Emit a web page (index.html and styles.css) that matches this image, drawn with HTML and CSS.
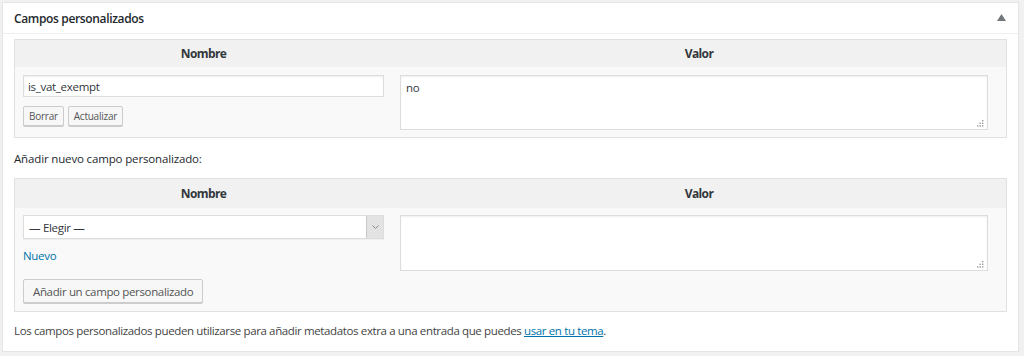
FILE: index.html
```html
<!DOCTYPE html>
<html lang="es">
<head>
<meta charset="utf-8">
<title>Campos personalizados</title>
<link rel="stylesheet" href="styles.css">
</head>
<body>
<div class="postbox">
  <div class="postbox-header">
    <h2 class="postbox-title">Campos personalizados</h2>
    <svg class="toggle" width="9" height="7" viewBox="0 0 9 7"><polygon points="4.5,0 9,7 0,7" fill="#72777c"/></svg>
  </div>
  <div class="inside">
    <table class="meta-table meta-list">
      <thead>
        <tr><th class="col-name">Nombre</th><th class="col-value">Valor</th></tr>
      </thead>
      <tbody>
        <tr>
          <td class="cell-name">
            <input class="text-input" type="text" value="is_vat_exempt">
            <div class="btn-row">
              <button class="btn btn-small">Borrar</button>
              <button class="btn btn-small">Actualizar</button>
            </div>
          </td>
          <td class="cell-value">
            <div class="ta-wrap">
              <textarea class="ta ta-1">no</textarea>
              <svg class="grip" width="7" height="7" viewBox="0 0 7 7"><g fill="#9a9a9a"><rect x="5" y="0" width="1.4" height="1.4"/><rect x="5" y="2.6" width="1.4" height="1.4"/><rect x="2.5" y="2.6" width="1.4" height="1.4"/><rect x="5" y="5.2" width="1.4" height="1.4"/><rect x="2.5" y="5.2" width="1.4" height="1.4"/><rect x="0" y="5.2" width="1.4" height="1.4"/></g></svg>
            </div>
          </td>
        </tr>
      </tbody>
    </table>

    <p class="add-head">Añadir nuevo campo personalizado:</p>

    <table class="meta-table meta-new">
      <thead>
        <tr><th class="col-name">Nombre</th><th class="col-value">Valor</th></tr>
      </thead>
      <tbody>
        <tr>
          <td class="cell-name">
            <div class="select">
              <span class="select-label">— Elegir —</span>
              <span class="select-arrow"><svg width="7" height="4" viewBox="0 0 7 4"><polyline points="0.5,0.5 3.5,3.5 6.5,0.5" fill="none" stroke="#8a8a8a" stroke-width="1"/></svg></span>
            </div>
            <a class="new-link" href="#">Nuevo</a>
            <button class="btn btn-add">Añadir un campo personalizado</button>
          </td>
          <td class="cell-value">
            <div class="ta-wrap">
              <textarea class="ta ta-2"></textarea>
              <svg class="grip" width="7" height="7" viewBox="0 0 7 7"><g fill="#9a9a9a"><rect x="5" y="0" width="1.4" height="1.4"/><rect x="5" y="2.6" width="1.4" height="1.4"/><rect x="2.5" y="2.6" width="1.4" height="1.4"/><rect x="5" y="5.2" width="1.4" height="1.4"/><rect x="2.5" y="5.2" width="1.4" height="1.4"/><rect x="0" y="5.2" width="1.4" height="1.4"/></g></svg>
            </div>
          </td>
        </tr>
      </tbody>
    </table>

    <p class="note">Los campos personalizados pueden utilizarse para añadir metadatos extra a una entrada que puedes <a class="note-link" href="#">usar en tu tema</a>.</p>
  </div>
</div>
</body>
</html>
```

FILE: styles.css
```css
* { box-sizing: border-box; }

html, body {
  margin: 0;
  background: #f1f1f1;
}

body {
  padding: 2px 5px 0 2px;
  font-family: "Open Sans", "Noto Sans", sans-serif;
  font-size: 11.5px;
  color: #444;
}

.postbox {
  background: #fff;
  border: 1px solid #e5e5e5;
  box-shadow: 0 1px 1px rgba(0,0,0,0.04);
  height: 350px;
}

.postbox-header {
  height: 31px;
  border-bottom: 1px solid #eee;
  display: flex;
  align-items: center;
  justify-content: space-between;
  padding: 0 11px 0 11px;
}

.postbox-title {
  margin: 0;
  font-size: 12px;
  font-weight: 600;
  color: #23282d;
  letter-spacing: -0.35px;
}

.toggle {
  margin-right: 1px;
  margin-top: -1px;
}

.inside {
  padding: 5px 11px 0 11px;
}

.meta-table {
  width: 100%;
  border: 1px solid #e1e1e1;
  border-spacing: 0;
  background: #f9f9f9;
}

.meta-table th {
  background: #f1f1f1;
  height: 27px;
  padding: 0 8px;
  font-size: 12px;
  font-weight: 700;
  color: #32373c;
  text-align: center;
  letter-spacing: -0.6px;
}

.col-name { width: 377px; }

.meta-table td {
  vertical-align: top;
}

.meta-list .cell-name {
  padding: 8px 8px 9px 8px;
}

.meta-list .cell-value {
  padding: 8px 18px 7px 8px;
}

.text-input {
  display: block;
  width: 361px;
  height: 22px;
  margin: 0;
  border: 1px solid #ddd;
  box-shadow: inset 0 1px 2px rgba(0,0,0,0.07);
  background: #fff;
  font-family: inherit;
  font-size: 11.5px;
  color: #32373c;
  padding: 0 4px;
  letter-spacing: -0.3px;
}

.btn-row {
  display: flex;
  gap: 4px;
  margin-top: 9px;
}

.btn {
  font-family: inherit;
  background: #f7f7f7;
  border: 1px solid #cccccc;
  border-radius: 2px;
  box-shadow: 0 1px 0 #cccccc;
  color: #555;
  cursor: pointer;
  margin: 0;
}

.btn-small {
  height: 20px;
  padding: 0 5px;
  font-size: 10px;
  line-height: 18px;
  letter-spacing: -0.25px;
}

.ta-wrap {
  position: relative;
  width: 588px;
}

.ta {
  display: block;
  width: 588px;
  margin: 0;
  border: 1px solid #ddd;
  box-shadow: inset 0 1px 2px rgba(0,0,0,0.07);
  background: #fff;
  font-family: inherit;
  font-size: 11.5px;
  color: #32373c;
  padding: 4px 5px;
  resize: none;
  letter-spacing: -0.3px;
}

.ta-1 { height: 55px; }
.ta-2 { height: 56px; }

.grip {
  position: absolute;
  right: 4px;
  bottom: 3px;
}

.add-head {
  margin: 13px 0 11px 0;
  font-size: 11.5px;
  color: #23282d;
  letter-spacing: -0.15px;
  line-height: 16px;
}

.meta-new th { height: 29px; }

.meta-new .cell-name {
  padding: 7px 8px 8px 8px;
}

.meta-new .cell-value {
  padding: 7px 18px 7px 8px;
}

.select {
  width: 361px;
  height: 24px;
  display: flex;
  align-items: stretch;
  border: 1px solid #ddd;
  background: #fff;
  box-shadow: 0 1px 1px rgba(0,0,0,0.04);
}

.select-label {
  flex: 1;
  display: flex;
  align-items: center;
  padding-left: 5px;
  font-size: 11.5px;
  color: #32373c;
  letter-spacing: -0.3px;
}

.select-arrow {
  width: 17px;
  background: #e3e3e3;
  border-left: 1px solid #c8c8c8;
  display: flex;
  align-items: center;
  justify-content: center;
}

.new-link {
  display: block;
  margin-top: 9px;
  font-size: 11.5px;
  color: #0073aa;
  text-decoration: none;
  line-height: 15px;
  letter-spacing: -0.3px;
}

.btn-add {
  display: block;
  margin-top: 16px;
  height: 24px;
  padding: 0 9px;
  font-size: 11.5px;
  letter-spacing: -0.35px;
}

.note {
  margin: 11px 0 0 0;
  font-size: 11.5px;
  color: #444;
  line-height: 16px;
  letter-spacing: -0.37px;
}

.note-link {
  color: #0073aa;
  text-decoration: underline;
}
```
